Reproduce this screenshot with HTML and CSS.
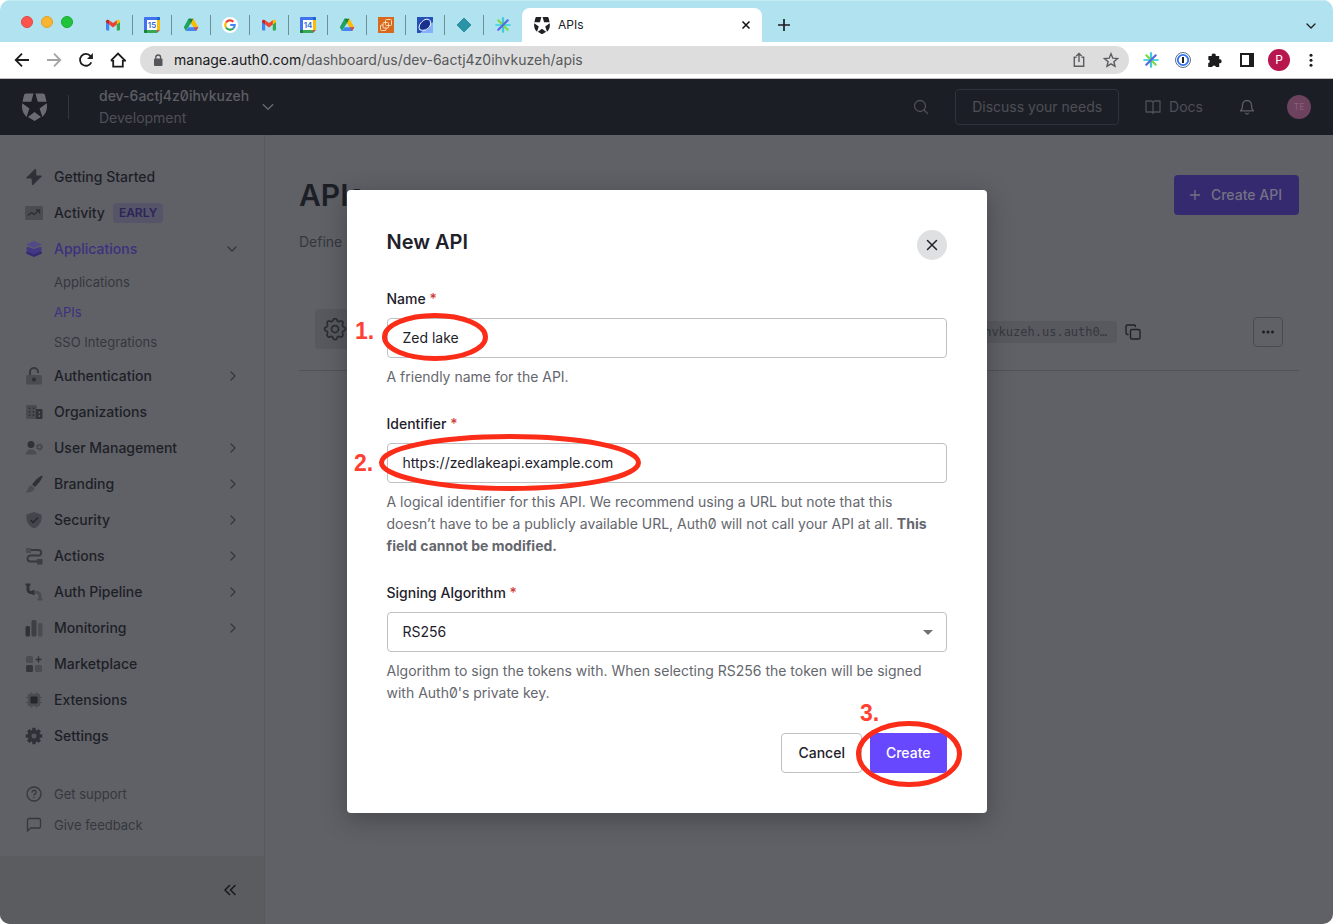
FILE: index.html
```html
<!DOCTYPE html>
<html lang="en">
<head>
<meta charset="utf-8">
<title>APIs</title>
<meta name="viewport" content="width=device-width, initial-scale=1">
<link rel="stylesheet" href="styles.css">
</head>
<body>
<svg class="defs" aria-hidden="true">
  <symbol id="gmail" viewBox="0 0 16 16"><path fill="#4285f4" d="M1 4.500V12.500a1 1 0 0 0 1 1h2.200V7z"/><path fill="#34a853" d="M15 4.500V12.500a1 1 0 0 1-1 1h-2.200V7z"/><path fill="#c5221f" d="M1 4.300C1 2.600 2.800 2.200 4.200 3.200V7.600L1 5.200z"/><path fill="#fbbc04" d="M15 4.300c0-1.700-1.800-2.100-3.200-1.100V7.600L15 5.200z"/><path fill="#ea4335" d="M4.200 3.200 8 6.100l3.800-2.900v4.400L8 10.500 4.200 7.600z"/></symbol>
  <symbol id="calendar" viewBox="0 0 16 16"><rect width="16" height="16" rx="1" fill="#4071ef"/><path fill="#fbbc04" d="M13 3H16v10h-3z"/><path fill="#34a853" d="M3 13h10V16H3z"/><path fill="#1967d2" d="M13 0H15a1 1 0 0 1 1 1v2h-3z"/><path fill="#188038" d="M0 13h3V16H1a1 1 0 0 1-1-1z"/><path fill="#ea4335" d="M13 13H16L13 16z"/><path fill="#b0e3ef" d="M16 13v3h-3z"/><path fill="#fff" d="M3 3h10v10H3z"/></symbol>
  <symbol id="drive" viewBox="0 0 16 16"><path fill="#1ea362" d="M5.400 1.800h2.700l2.300 4.100-2 .8L8 6 2.900 14 .8 10.200z"/><path fill="#188038" d="M5.400 1.800h5.200L8 6z"/><path fill="#fbbc04" d="M10.600 1.800l4.700 8.400h-4.900L8 6z"/><path fill="#4285f4" d="M5.600 10.200h9.700L13 14H2.900z"/><path fill="#ea4335" d="M11 10.200h4.300L13.100 14z"/></symbol>
  <symbol id="burst" viewBox="0 0 16 16"><g stroke-width="2.200" stroke-linecap="round"><path stroke="#4fd9e8" d="M1.200 8h13.600"/><path stroke="#44c8dc" d="M8 1.200v13.600"/><path stroke="#77dc45" d="M3.300 3.300l9.400 9.400"/><path stroke="#5766e5" d="M12.700 3.300l-9.400 9.400"/></g></symbol>
  <symbol id="shield" viewBox="0 0 26 28"><path fill="currentColor" d="M4.500 0H12L9.600 8.600H.5L2 2C2.300.7 3.100 0 4.500 0zM14 0h7.500c1.400 0 2.200.700 2.500 2l1.500 6.600h-9.100zM.3 10.200l7.400 5.400-2.900 8.700C1.300 21-.8 16.500.3 10.200zM25.700 10.200c1.100 6.300-1 10.800-4.500 14.100l-2.900-8.700zM13 19.300l6.800 5L13 28.500l-6.800-4.200z"/></symbol>
  <symbol id="right" viewBox="0 0 10 12"><path d="M3 2l4 4-4 4" fill="none" stroke="currentColor" stroke-width="1.200" stroke-linecap="round" stroke-linejoin="round"/></symbol>
  <symbol id="down" viewBox="0 0 12 10"><path d="M2 3l4 4 4-4" fill="none" stroke="currentColor" stroke-width="1.300" stroke-linecap="round" stroke-linejoin="round"/></symbol>
  <symbol id="gear" viewBox="0 0 24 24"><path d="M10.325 4.317c.426-1.756 2.924-1.756 3.350 0a1.724 1.724 0 0 0 2.573 1.066c1.543-.940 3.310.826 2.370 2.370a1.724 1.724 0 0 0 1.065 2.572c1.756.426 1.756 2.924 0 3.350a1.724 1.724 0 0 0-1.066 2.573c.940 1.543-.826 3.310-2.370 2.370a1.724 1.724 0 0 0-2.572 1.065c-.426 1.756-2.924 1.756-3.350 0a1.724 1.724 0 0 0-2.573-1.066c-1.543.940-3.310-.826-2.370-2.370a1.724 1.724 0 0 0-1.065-2.572c-1.756-.426-1.756-2.924 0-3.350a1.724 1.724 0 0 0 1.066-2.573c-.940-1.543.826-3.310 2.370-2.370.996.608 2.296.070 2.572-1.065z"/><circle cx="12" cy="12" r="3"/></symbol>
</svg>

<div class="window">
  <div class="tabstrip">
    <div class="lights"><span class="light red"></span><span class="light amber"></span><span class="light green"></span></div>
    <nav class="pinned" aria-label="Pinned tabs">
      <a class="pin" href="#" aria-label="Gmail"><svg><use href="#gmail"/></svg></a>
      <a class="pin" href="#" aria-label="Calendar"><svg viewBox="0 0 16 16"><use href="#calendar" width="16" height="16"/><text class="day" x="8" y="11">15</text></svg></a>
      <a class="pin" href="#" aria-label="Drive"><svg><use href="#drive"/></svg></a>
      <a class="pin" href="#" aria-label="Google"><svg viewBox="0 0 16 16"><circle cx="8" cy="8" r="8" fill="#fff"/><g fill="none" stroke-width="2.200"><path stroke="#ea4335" d="M4 5.500A4.800 4.800 0 0 1 11.400 4.700"/><path stroke="#fbbc04" d="M4 5.500a4.800 4.800 0 0 0 0 5"/><path stroke="#34a853" d="M4 10.500a4.800 4.800 0 0 0 7.200 1"/><path stroke="#4285f4" d="M8.200 8h4.500a4.800 4.800 0 0 1-1.500 3.500"/></g></svg></a>
      <a class="pin" href="#" aria-label="Gmail, second inbox"><svg><use href="#gmail"/></svg></a>
      <a class="pin" href="#" aria-label="Calendar, second account"><svg viewBox="0 0 16 16"><use href="#calendar" width="16" height="16"/><text class="day" x="8" y="11">14</text></svg></a>
      <a class="pin" href="#" aria-label="Drive, second account"><svg><use href="#drive"/></svg></a>
      <a class="pin" href="#" aria-label="Cloud console"><svg viewBox="0 0 16 16"><path fill="#d9691c" d="M0 0h16v16H0z"/><g fill="none" stroke="#f9d9b8" stroke-width="1"><rect x="7.500" y="2.500" width="6" height="6" rx="1"/><rect x="5" y="5.500" width="5.500" height="5.500" rx="1"/><path d="M5 8H3.500a1 1 0 0 0-1 1v3.500a1 1 0 0 0 1 1H7a1 1 0 0 0 1-1V11"/></g></svg></a>
      <a class="pin" href="#" aria-label="Orbit"><svg viewBox="0 0 16 16"><path fill="#2450b8" d="M0 0h16v16H0z"/><path fill="#85b1fb" d="M16 5v11H3z"/><circle cx="7.700" cy="7.700" r="5.300" fill="#19308f"/><path d="M3 13C.5 10 3.500 4.500 8 2.600c5-1.700 7 2.400 5 6.400-2 3.700-7 5.200-10 3.800" fill="none" stroke="#fff" stroke-width="1"/></svg></a>
      <a class="pin" href="#" aria-label="Diamond"><svg viewBox="0 0 16 16"><path fill="#2a93a5" d="M8 1l7 7-7 7-7-7z" stroke="#2a93a5" stroke-linejoin="round"/></svg></a>
      <a class="pin" href="#" aria-label="Burst"><svg><use href="#burst"/></svg></a>
    </nav>
    <div class="tab">
      <svg class="tab-logo"><use href="#shield"/></svg><span class="tab-name">APIs</span>
      <button class="plain" aria-label="Close tab"><svg width="10" height="10" viewBox="0 0 10 10"><path d="M1.500 1.500l7 7M8.500 1.500l-7 7" stroke="#111" stroke-width="1.500"/></svg></button>
    </div>
    <button class="plain newtab" aria-label="New tab"><svg width="14" height="14" viewBox="0 0 14 14"><path d="M7 1v12M1 7h12" stroke="#1d1d1f" stroke-width="1.700"/></svg></button>
    <button class="plain tabmenu" aria-label="Search tabs"><svg width="12" height="10"><use href="#down"/></svg></button>
  </div>

  <div class="toolbar">
    <button class="tool" aria-label="Back"><svg viewBox="0 0 16 16"><path d="M15 8H2M8 1.700L1.700 8 8 14.300" class="ln"/></svg></button>
    <button class="tool faded" aria-label="Forward"><svg viewBox="0 0 16 16"><path d="M1 8h13M8 1.700L14.300 8 8 14.300" class="ln"/></svg></button>
    <button class="tool" aria-label="Reload"><svg viewBox="0 0 16 16"><path d="M13.300 10.300A5.900 5.900 0 1 1 12.500 4.100L14 5.700" class="ln"/><path d="M14.900 1v6H9z" fill="currentColor"/></svg></button>
    <button class="tool" aria-label="Home"><svg viewBox="0 0 16 16"><path d="M3.200 8v6.600h9.600V8M.9 8.700L8 1.500l7.100 7.200H12.800M.9 8.700h2.300" class="ln"/></svg></button>
    <div class="omnibox">
      <svg width="10" height="13" viewBox="0 0 10 13"><rect x="1" y="4.500" width="8.500" height="7.500" rx="1" fill="#55565a"/><path d="M2.800 5V3.400a2.400 2.400 0 0 1 4.800 0V5" fill="none" stroke="#55565a" stroke-width="1.300"/></svg>
      <p class="url"><span class="host">manage.auth0.com</span>/dashboard/us/dev-6actj4z0ihvkuzeh/apis</p>
      <button class="tool gray" aria-label="Share"><svg viewBox="0 0 16 16"><path d="M5.500 5.200h-2.200v9.100h9.400V5.200h-2.200M8 10V1.600M5.300 4L8 1.500 10.700 4" class="th"/></svg></button>
      <button class="tool gray" aria-label="Bookmark"><svg viewBox="0 0 16 16"><path d="M8 1.800l1.800 4.400 4.700.4-3.600 3.100 1.100 4.600L8 11.900l-4 2.400 1.100-4.600-3.600-3.100 4.700-.4z" class="th"/></svg></button>
    </div>
    <button class="tool" aria-label="Burst extension"><svg><use href="#burst"/></svg></button>
    <button class="tool" aria-label="Password manager"><svg viewBox="0 0 16 16"><circle cx="8" cy="8" r="7.500" fill="#fff" stroke="#5e6f86" stroke-width="1"/><circle cx="8" cy="8" r="5.200" fill="#fff" stroke="#2f73ee" stroke-width="1.800"/><path d="M8 5v6" stroke="#222" stroke-width="2"/></svg></button>
    <button class="tool" aria-label="Extensions"><svg viewBox="0 0 16 16"><path fill="currentColor" d="M1.500 4h3.300a2 2 0 1 1 3.900 0h3.500v3.300a2 2 0 1 1 0 3.900V15H9a2 2 0 0 0-3.900 0H1.200v-3.700a2 2 0 0 0 0-3.900z"/></svg></button>
    <button class="tool" aria-label="Side panel"><svg viewBox="0 0 16 16"><path fill="currentColor" fill-rule="evenodd" d="M1 1h14v14H1zM3 3v10h7V3z"/></svg></button>
    <button class="profile" aria-label="Profile">P</button>
    <button class="tool" aria-label="Browser menu"><svg viewBox="0 0 16 16"><g fill="currentColor"><circle cx="8" cy="3.200" r="1.500"/><circle cx="8" cy="8.200" r="1.500"/><circle cx="8" cy="13.200" r="1.500"/></g></svg></button>
  </div>

  <div class="page">
    <header class="topbar">
      <a href="#" class="logo" aria-label="Auth0 home"><svg><use href="#shield"/></svg></a>
      <span class="bar"></span>
      <div class="tenant"><strong>dev-6actj4z0ihvkuzeh</strong><span>Development</span></div>
      <svg class="tenant-arrow" width="14" height="12"><use href="#down"/></svg>
      <button class="plain search" aria-label="Search"><svg class="stroke" width="16" height="16" viewBox="0 0 16 16"><circle cx="7" cy="7" r="5.500"/><path d="M11 11l3.500 3.500"/></svg></button>
      <button class="discuss">Discuss your needs</button>
      <a href="#" class="docs"><svg class="stroke" width="16" height="16" viewBox="0 0 16 16"><path d="M8 3.500C7.600 2.500 7 2 6 2H1v11h5.500c1 0 1.500.500 1.500 1.500 0-1 .5-1.500 1.500-1.500H15V2h-5c-1 0-1.600.500-2 1.500v11"/></svg>Docs</a>
      <button class="plain bell" aria-label="Notifications"><svg class="stroke" width="16" height="16" viewBox="0 0 16 16"><path d="M12.500 6a4.500 4.500 0 0 0-9 0c0 4.500-2 5.800-2 5.800h13S12.500 10.500 12.500 6M9.400 14.300a1.600 1.600 0 0 1-2.800 0"/></svg></button>
      <button class="user" aria-label="Account">TE</button>
    </header>

    <div class="body">
      <aside class="sidebar">
        <nav class="menu" aria-label="Main">
          <a class="item" href="#"><svg class="ico" viewBox="0 0 18 18"><path fill="#2f3138" d="M10.500 1L1.500 10h5.500L7.500 17l9-9H11z" stroke="#2f3138" stroke-linejoin="round"/></svg>Getting Started</a>
          <a class="item" href="#"><svg class="ico" viewBox="0 0 18 18"><rect y="2" width="18" height="14" rx="1.500" fill="#4b4c52"/><path d="M3 11.500l3.500-3 2.500 2 5.500-4.500M11 6h3.500v3.500" fill="none" stroke="#2c2e35" stroke-width="1.300"/></svg>Activity <span class="badge">EARLY</span></a>
          <a class="item on" href="#"><svg class="ico" viewBox="0 0 18 18"><path fill="#352a70" d="M1.500 11.500h15l.5 2-8 3.500-8-3.500z"/><path fill="#413783" d="M1 8l2-1.200L9 9l6-2.200L17 8l-1.200 1.500 1.200 1.500-8 3.500L1 11l1.200-1.500z"/><path fill="#514a87" d="M1 4.500L9 1l8 3.500L9 8z"/></svg>Applications<svg class="arrow" width="12" height="10"><use href="#down"/></svg></a>
          <div class="sub"><a href="#">Applications</a><a class="on" href="#">APIs</a><a href="#">SSO Integrations</a></div>
          <a class="item" href="#"><svg class="ico" viewBox="0 0 18 18"><path d="M5 8V5a4 4 0 0 1 8 0v1" fill="none" stroke="#36383f" stroke-width="2"/><rect x="1" y="8" width="16" height="9.500" rx="1.500" fill="#4b4c52"/><circle cx="9" cy="12.500" r="2" fill="#2c2e35"/></svg>Authentication<svg class="arrow" width="10" height="12"><use href="#right"/></svg></a>
          <a class="item" href="#"><svg class="ico" viewBox="0 0 18 18"><rect x="1" y="2" width="11" height="14" rx="1" fill="#4b4c52"/><rect x="11" y="6" width="6.500" height="10" rx="1" fill="#303239"/><path d="M4.500 4.500v9M8.500 4.500v9" stroke="#2c2e35" stroke-width="1.500" stroke-dasharray="1.500 2"/><path d="M14.300 8.500v5.500" stroke="#5b5c61" stroke-width="1.500" stroke-dasharray="2 1.500"/></svg>Organizations</a>
          <a class="item" href="#"><svg class="ico" viewBox="0 0 18 18"><circle cx="6" cy="5.500" r="3.500" fill="#303239"/><path fill="#4b4c52" d="M1 15.500c0-3 1.500-5 5-5s5.500 2 5.500 5z"/><circle cx="14.500" cy="8" r="2" fill="none" stroke="#45464d" stroke-width="1.500"/><circle cx="14.500" cy="8" r="3.200" fill="none" stroke="#45464d" stroke-width="1" stroke-dasharray="1.300 1.200"/></svg>User Management<svg class="arrow" width="10" height="12"><use href="#right"/></svg></a>
          <a class="item" href="#"><svg class="ico" viewBox="0 0 18 18"><path fill="#2f3138" d="M16 1c2-.5 2 0 1 2-1.500 3-4 6-7 9L7 9.500C10 5.500 13 2.500 16 1z"/><path fill="#4b4c52" d="M6.500 10.500l3 2.500C8.500 17 5 17.800.5 17.500c3-2 2-7 6-7z"/></svg>Branding<svg class="arrow" width="10" height="12"><use href="#right"/></svg></a>
          <a class="item" href="#"><svg class="ico" viewBox="0 0 18 18"><path fill="#45464d" d="M9 1l7.500 2.500c.5 6-.5 10.500-7.500 14C2 14 1 9.500 1.500 3.500z"/><path d="M5.500 9L8 11.500l5-5" fill="none" stroke="#292b32" stroke-width="1.700"/></svg>Security<svg class="arrow" width="10" height="12"><use href="#right"/></svg></a>
          <a class="item" href="#"><svg class="ico" viewBox="0 0 18 18"><path d="M6 3h7.500a2.700 2.700 0 0 1 0 5.500h-8a3 3 0 0 0 0 6H12" fill="none" stroke="#36383f" stroke-width="1.800"/><path fill="#4b4c52" d="M1 1h5v5H1z"/><path fill="#3c3e45" d="M12 12h5.500v5.500H12z"/></svg>Actions<svg class="arrow" width="10" height="12"><use href="#right"/></svg></a>
          <a class="item" href="#"><svg class="ico" viewBox="0 0 18 18"><path fill="none" stroke="#303239" stroke-width="3" d="M3 2v4.500A3 3 0 0 0 6 9.500h3"/><path stroke="#303239" stroke-width="2" d="M.5 1.500h5M8.500 7v5"/><path fill="none" stroke="#4b4c52" stroke-width="3" d="M10 9.500h2a3 3 0 0 1 3 3V16"/><path stroke="#4b4c52" stroke-width="2" d="M12.500 16.500h5"/></svg>Auth Pipeline<svg class="arrow" width="10" height="12"><use href="#right"/></svg></a>
          <a class="item" href="#"><svg class="ico" viewBox="0 0 18 18"><rect x=".5" y="7" width="4.500" height="10.500" rx="1.500" fill="#303239"/><rect x="6.500" y="1" width="5" height="16.500" rx="1.500" fill="#3d3f46"/><rect x="13" y="4" width="4.500" height="13.500" rx="1.500" fill="#4b4c52"/></svg>Monitoring<svg class="arrow" width="10" height="12"><use href="#right"/></svg></a>
          <a class="item" href="#"><svg class="ico" viewBox="0 0 18 18"><rect x="1" y="1" width="7" height="7" rx="1.500" fill="#4b4c52"/><rect x="1" y="10" width="7" height="7" rx="1.500" fill="#34363d"/><rect x="10" y="10" width="7" height="7" rx="1.500" fill="#4b4c52"/><path d="M13.500 1.500v6M10.500 4.500h6" stroke="#303239" stroke-width="1.500"/></svg>Marketplace</a>
          <a class="item" href="#"><svg class="ico" viewBox="0 0 18 18"><path d="M6.500 1v16M11.500 1v16M1 6.500h16M1 11.500h16" stroke="#4b4c52" stroke-width="1.200"/><rect x="2.800" y="2.800" width="12.400" height="12.400" rx="1.500" fill="#4b4c52"/><rect x="5.500" y="5.500" width="7" height="7" rx="1" fill="#25272e"/></svg>Extensions</a>
          <a class="item" href="#"><svg class="ico" viewBox="0 0 18 18"><path d="M9 .8v16.400M.8 9h16.400M3.200 3.200l11.600 11.600M14.800 3.200L3.200 14.800" stroke="#2f3138" stroke-width="3.400"/><circle cx="9" cy="9" r="6.200" fill="#2f3138"/><circle cx="9" cy="9" r="2.500" fill="#55565b"/></svg>Settings</a>
        </nav>
        <nav class="help-links" aria-label="Help">
          <a href="#"><svg class="stroke" width="18" height="18" viewBox="0 0 18 18"><circle cx="9" cy="9" r="7"/><path d="M7 7.200a2 2 0 1 1 2.800 1.900c-.6.300-.8.600-.8 1.100M9 12.300v.2"/></svg>Get support</a>
          <a href="#"><svg class="stroke" width="18" height="18" viewBox="0 0 18 18"><path d="M2.500 15V4A1.500 1.500 0 0 1 4 2.500h10A1.500 1.500 0 0 1 15.500 4v6.500A1.500 1.500 0 0 1 14 12H5.500z"/></svg>Give feedback</a>
        </nav>
        <div class="collapse"><button class="plain" aria-label="Collapse sidebar"><svg width="14" height="14" viewBox="0 0 14 14"><path d="M6.500 2.500L2 7l4.500 4.500M12 2.500L7.500 7l4.500 4.500" fill="none" stroke="#15171e" stroke-width="1.500" stroke-linecap="round" stroke-linejoin="round"/></svg></button></div>
      </aside>

      <main class="content">
        <div class="heading"><h1>APIs</h1><button class="create-api"><svg width="12" height="12" viewBox="0 0 12 12"><path d="M6 1v10M1 6h10" stroke="currentColor" stroke-width="1.300"/></svg>Create API</button></div>
        <p class="intro">Define</p>
        <div class="api-row">
          <span class="api-icon"><svg width="28" height="28"><use href="#gear"/></svg></span>
          <code>https://dev-6actj4z0ihvkuzeh.us.auth0…</code>
          <button class="plain copy" aria-label="Copy"><svg width="16" height="16" viewBox="0 0 16 16"><g fill="none" stroke="#202229" stroke-width="1.400" stroke-linejoin="round" stroke-linecap="round"><rect x="5.500" y="5.500" width="9.500" height="9.500" rx="1.500"/><path d="M3 10.500H2.500A1.500 1.500 0 0 1 1 9V2.500A1.500 1.500 0 0 1 2.500 1H9a1.500 1.500 0 0 1 1.500 1.500"/></g></svg></button>
          <button class="more" aria-label="More actions"><svg width="14" height="4" viewBox="0 0 14 4"><g fill="#1b1d24"><circle cx="2.500" cy="2" r="1.500"/><circle cx="7" cy="2" r="1.500"/><circle cx="11.500" cy="2" r="1.500"/></g></svg></button>
        </div>
      </main>
    </div>

    <div class="overlay">
      <form class="modal" role="dialog" aria-labelledby="modal-title">
        <div class="modal-head"><h2 id="modal-title">New API</h2><button type="button" class="close" aria-label="Close"><svg width="12" height="12" viewBox="0 0 12 12"><path d="M1.500 1.500l9 9M10.500 1.500l-9 9" stroke="#1e212a" stroke-width="1.500" stroke-linecap="round"/></svg></button></div>
        <div class="field">
          <label for="name">Name <b>*</b></label>
          <input id="name" type="text" value="Zed lake">
          <p>A friendly name for the API.</p>
        </div>
        <div class="field">
          <label for="identifier">Identifier <b>*</b></label>
          <input id="identifier" type="text" value="https://zedlakeapi.example.com">
          <p>A logical identifier for this API. We recommend using a URL but note that this doesn’t have to be a publicly available URL, Auth0 will not call your API at all. <strong>This field cannot be modified.</strong></p>
        </div>
        <div class="field">
          <label for="algorithm">Signing Algorithm <b>*</b></label>
          <div class="select"><select id="algorithm"><option>RS256</option></select><svg width="10" height="5" viewBox="0 0 10 5"><path d="M0 0h10L5 5z" fill="#6f7075"/></svg></div>
          <p>Algorithm to sign the tokens with. When selecting RS256 the token will be signed with Auth0's private key.</p>
        </div>
        <div class="actions"><button type="button" class="cancel">Cancel</button><button type="submit" class="create">Create</button></div>
        <svg class="marks" viewBox="0 0 640 623">
          <g fill="none" stroke="#fb2c18" stroke-width="5"><ellipse cx="88" cy="147" rx="50.500" ry="21.500"/><ellipse cx="163" cy="272.500" rx="128.500" ry="26"/><ellipse cx="562" cy="564" rx="50.500" ry="30.500"/></g>
          <g class="numbers"><text x="8" y="149">1.</text><text x="7" y="281">2.</text><text x="513" y="531">3.</text></g>
        </svg>
      </form>
    </div>
  </div>
</div>
</body>
</html>
```

FILE: styles.css
```css
* { box-sizing: border-box; }
body { margin: 0; background: #fff; font-family: Inter, "Liberation Sans", sans-serif; font-size: 14px; line-height: 22px; color: #1e212a; }
button, input, select { font: inherit; color: inherit; }
button { cursor: pointer; }
a { color: inherit; text-decoration: none; }
h1, h2, p { margin: 0; }
svg { flex: none; display: block; }
.defs { position: absolute; width: 0; height: 0; }
.plain, .tool { display: flex; padding: 0; border: 0; background: none; }
.stroke { fill: none; stroke: currentColor; stroke-width: 1.3px; stroke-linejoin: round; stroke-linecap: round; }
.window { display: flex; flex-direction: column; min-height: 100vh; border-radius: 10px; overflow: hidden; }

/* Browser tabs */
.tabstrip { display: flex; align-items: center; height: 42px; padding-right: 16px; background: #b0e3ef; border-top: 1px solid #c5ecf4; }
.lights { display: flex; gap: 8px; padding: 0 21px; }
.light { width: 12px; height: 12px; border-radius: 50%; }
.red { background: #ff544d; border: 1px solid #e14640; }
.amber { background: #fab42f; border: 1px solid #dfa023; }
.green { background: #1fc43b; border: 1px solid #1ba731; }
.pinned { display: flex; align-self: flex-end; height: 34px; align-items: center; }
.pin { display: flex; justify-content: center; width: 39px; height: 20px; align-items: center; border-right: 1px solid #6d9098; }
.pin:last-child { border-right: 0; width: 38px; }
.pin svg { width: 16px; height: 16px; }
.day { font-size: 8px; font-weight: 600; fill: #3367d6; text-anchor: middle; }
.tab { display: flex; align-items: center; align-self: flex-end; width: 240px; height: 34px; padding: 0 11px 0 12px; background: #fff; border-radius: 8px 8px 0 0; color: #202124; font-size: 12px; }
.tab-logo { width: 16px; height: 17px; }
.tab-name { flex: 1; padding-left: 8px; }
.newtab { margin: 6px 0 0 15px; }
.tabmenu { margin: 8px 0 0 auto; color: #1d1d1f; }

/* Browser toolbar */
.toolbar { display: flex; align-items: center; gap: 16px; height: 37px; padding: 0 14px; background: #fff; border-bottom: 1px solid #bfbfbf; }
.tool { color: #1d1d1f; }
.tool svg { width: 16px; height: 16px; }
.faded { color: #a3a4a6; }
.gray { color: #5b5c60; }
.ln { fill: none; stroke: currentColor; stroke-width: 1.8px; }
.th { fill: none; stroke: currentColor; stroke-width: 1.4px; }
.omnibox { flex: 1; display: flex; align-items: center; gap: 16px; height: 28px; margin: 0 -2px; padding: 0 10px 0 13px; border-radius: 14px; background: #dddddd; }
.url { flex: 1; margin-left: -5px; color: #58595c; white-space: nowrap; overflow: hidden; }
.host { color: #18191b; }
.profile { width: 22px; height: 22px; margin: 0 -3px; padding: 0; border: 0; border-radius: 50%; background: #b8164f; color: #fff; font-size: 12px; line-height: 22px; }

/* Application */
.page { position: relative; flex: 1; display: flex; flex-direction: column; background: #606166; font-variant-numeric: slashed-zero; }
.topbar { display: flex; align-items: center; height: 56px; padding: 0 22px; background: #1c1e26; color: #4e5056; }
.logo { color: #6b6c71; }
.logo svg { width: 25px; height: 28px; }
.bar { width: 1px; height: 24px; margin: 0 30px 0 21px; background: #35373e; }
.tenant { display: flex; flex-direction: column; }
.tenant strong { font-weight: 500; color: #5c5e64; }
.tenant-arrow { margin-left: 12px; color: #64666b; }
.search { margin-left: auto; }
.discuss { height: 36px; margin: 0 26px; padding: 0 16px; border: 1px solid #30323b; border-radius: 4px; background: none; }
.docs { display: flex; align-items: center; gap: 8px; }
.bell { margin: 0 32px 0 36px; color: #5d5f64; }
.user { width: 24px; height: 24px; padding: 0; border: 0; border-radius: 50%; background: #6c425e; color: #8c5d7c; font-size: 9px; line-height: 24px; }

.body { flex: 1; display: flex; }
.sidebar { display: flex; flex-direction: column; width: 265px; border-right: 1px solid #57585d; color: #1d1f27; }
.menu { padding-top: 24px; }
.item { display: flex; align-items: center; height: 36px; padding: 0 26px 0 25px; font-weight: 500; }
.ico { width: 18px; height: 18px; margin-right: 11px; }
.item.on, .sub .on { color: #3b3080; }
.item .arrow { margin-left: auto; color: #33353c; }
.badge { margin-left: 8px; padding: 0 6px; height: 20px; border-radius: 4px; background: #565469; color: #2c2558; font-size: 12px; font-weight: 600; line-height: 20px; }
.sub { padding: 0 0 1px 54px; font-size: 13px; line-height: 30px; color: #35373e; }
.sub a { display: block; }
.help-links { display: grid; gap: 1px; padding: 25px 25px 15px; font-size: 13px; line-height: 30px; color: #35373e; }
.help-links a { display: flex; align-items: center; gap: 11px; }
.collapse { display: flex; justify-content: flex-end; align-items: center; height: 68px; margin-top: auto; padding-right: 27px; background: #5b5c60; }

.content { flex: 1; min-width: 0; padding: 40px 34px; color: #35373e; }
.heading { display: flex; align-items: center; justify-content: space-between; }
h1 { font-size: 30px; line-height: 40px; font-weight: 600; color: #1d1f27; }
.create-api { display: flex; align-items: center; gap: 10px; height: 40px; padding: 0 17px 0 15px; border: 0; border-radius: 4px; background: #352a70; color: #747283; font-weight: 500; }
.intro { padding-top: 16px; }
.api-row { display: flex; align-items: center; height: 78px; margin-top: 40px; padding: 0 16px; border-bottom: 1px solid #515257; }
.api-icon { display: grid; place-items: center; width: 40px; height: 40px; margin-bottom: 6px; border-radius: 4px; background: #58595e; }
.api-icon svg { fill: none; stroke: #2c2e35; stroke-width: 1.5px; }
code { margin-left: auto; padding: 0 10px; border-radius: 4px; background: #58595e; font: 12px/22px "DejaVu Sans Mono", monospace; }
.copy { margin: 0 112px 0 8px; }
.more { display: grid; place-items: center; width: 30px; height: 30px; padding: 0; border: 1px solid #494a50; border-radius: 4px; background: none; }

/* Dialog */
.overlay { position: absolute; inset: 0; display: grid; place-items: center; }
.modal { position: relative; width: 640px; max-width: 100%; padding: 40px; border-radius: 4px; background: #fff; box-shadow: 0 6px 24px rgba(20, 22, 30, .35); }
.modal-head { display: flex; justify-content: space-between; align-items: flex-start; margin-bottom: 28px; }
h2 { font-size: 20px; line-height: 24px; font-weight: 600; }
.close { display: grid; place-items: center; width: 30px; height: 30px; padding: 0; border: 0; border-radius: 50%; background: #dfe0e2; }
.field { display: grid; gap: 8px; margin-bottom: 25px; }
.field label { font-weight: 500; }
.field label b { color: #d03c38; font-weight: 500; }
.field input, .field select { width: 100%; height: 40px; padding: 0 15px; border: 1px solid #bfc0c3; border-radius: 4px; background: #fff; color: #1e212a; }
.field input { padding-bottom: 2px; }
.field p { padding-right: 8px; color: #65676e; }
.select { position: relative; }
.select select { appearance: none; display: block; }
.select svg { position: absolute; right: 14px; top: 18px; pointer-events: none; }
.actions { display: flex; justify-content: flex-end; gap: 8px; padding-top: 4px; }
.actions button { height: 40px; padding: 0 16px; font-weight: 500; border-radius: 4px; }
.cancel { border: 1px solid #bfc0c3; background: #fff; }
.create { border: 0; background: #6748ff; color: #fff; }
.marks { position: absolute; inset: 0; width: 100%; height: 100%; overflow: visible; pointer-events: none; }
.numbers { font: bold 23px "Liberation Sans", sans-serif; fill: #ff4033; }
```
